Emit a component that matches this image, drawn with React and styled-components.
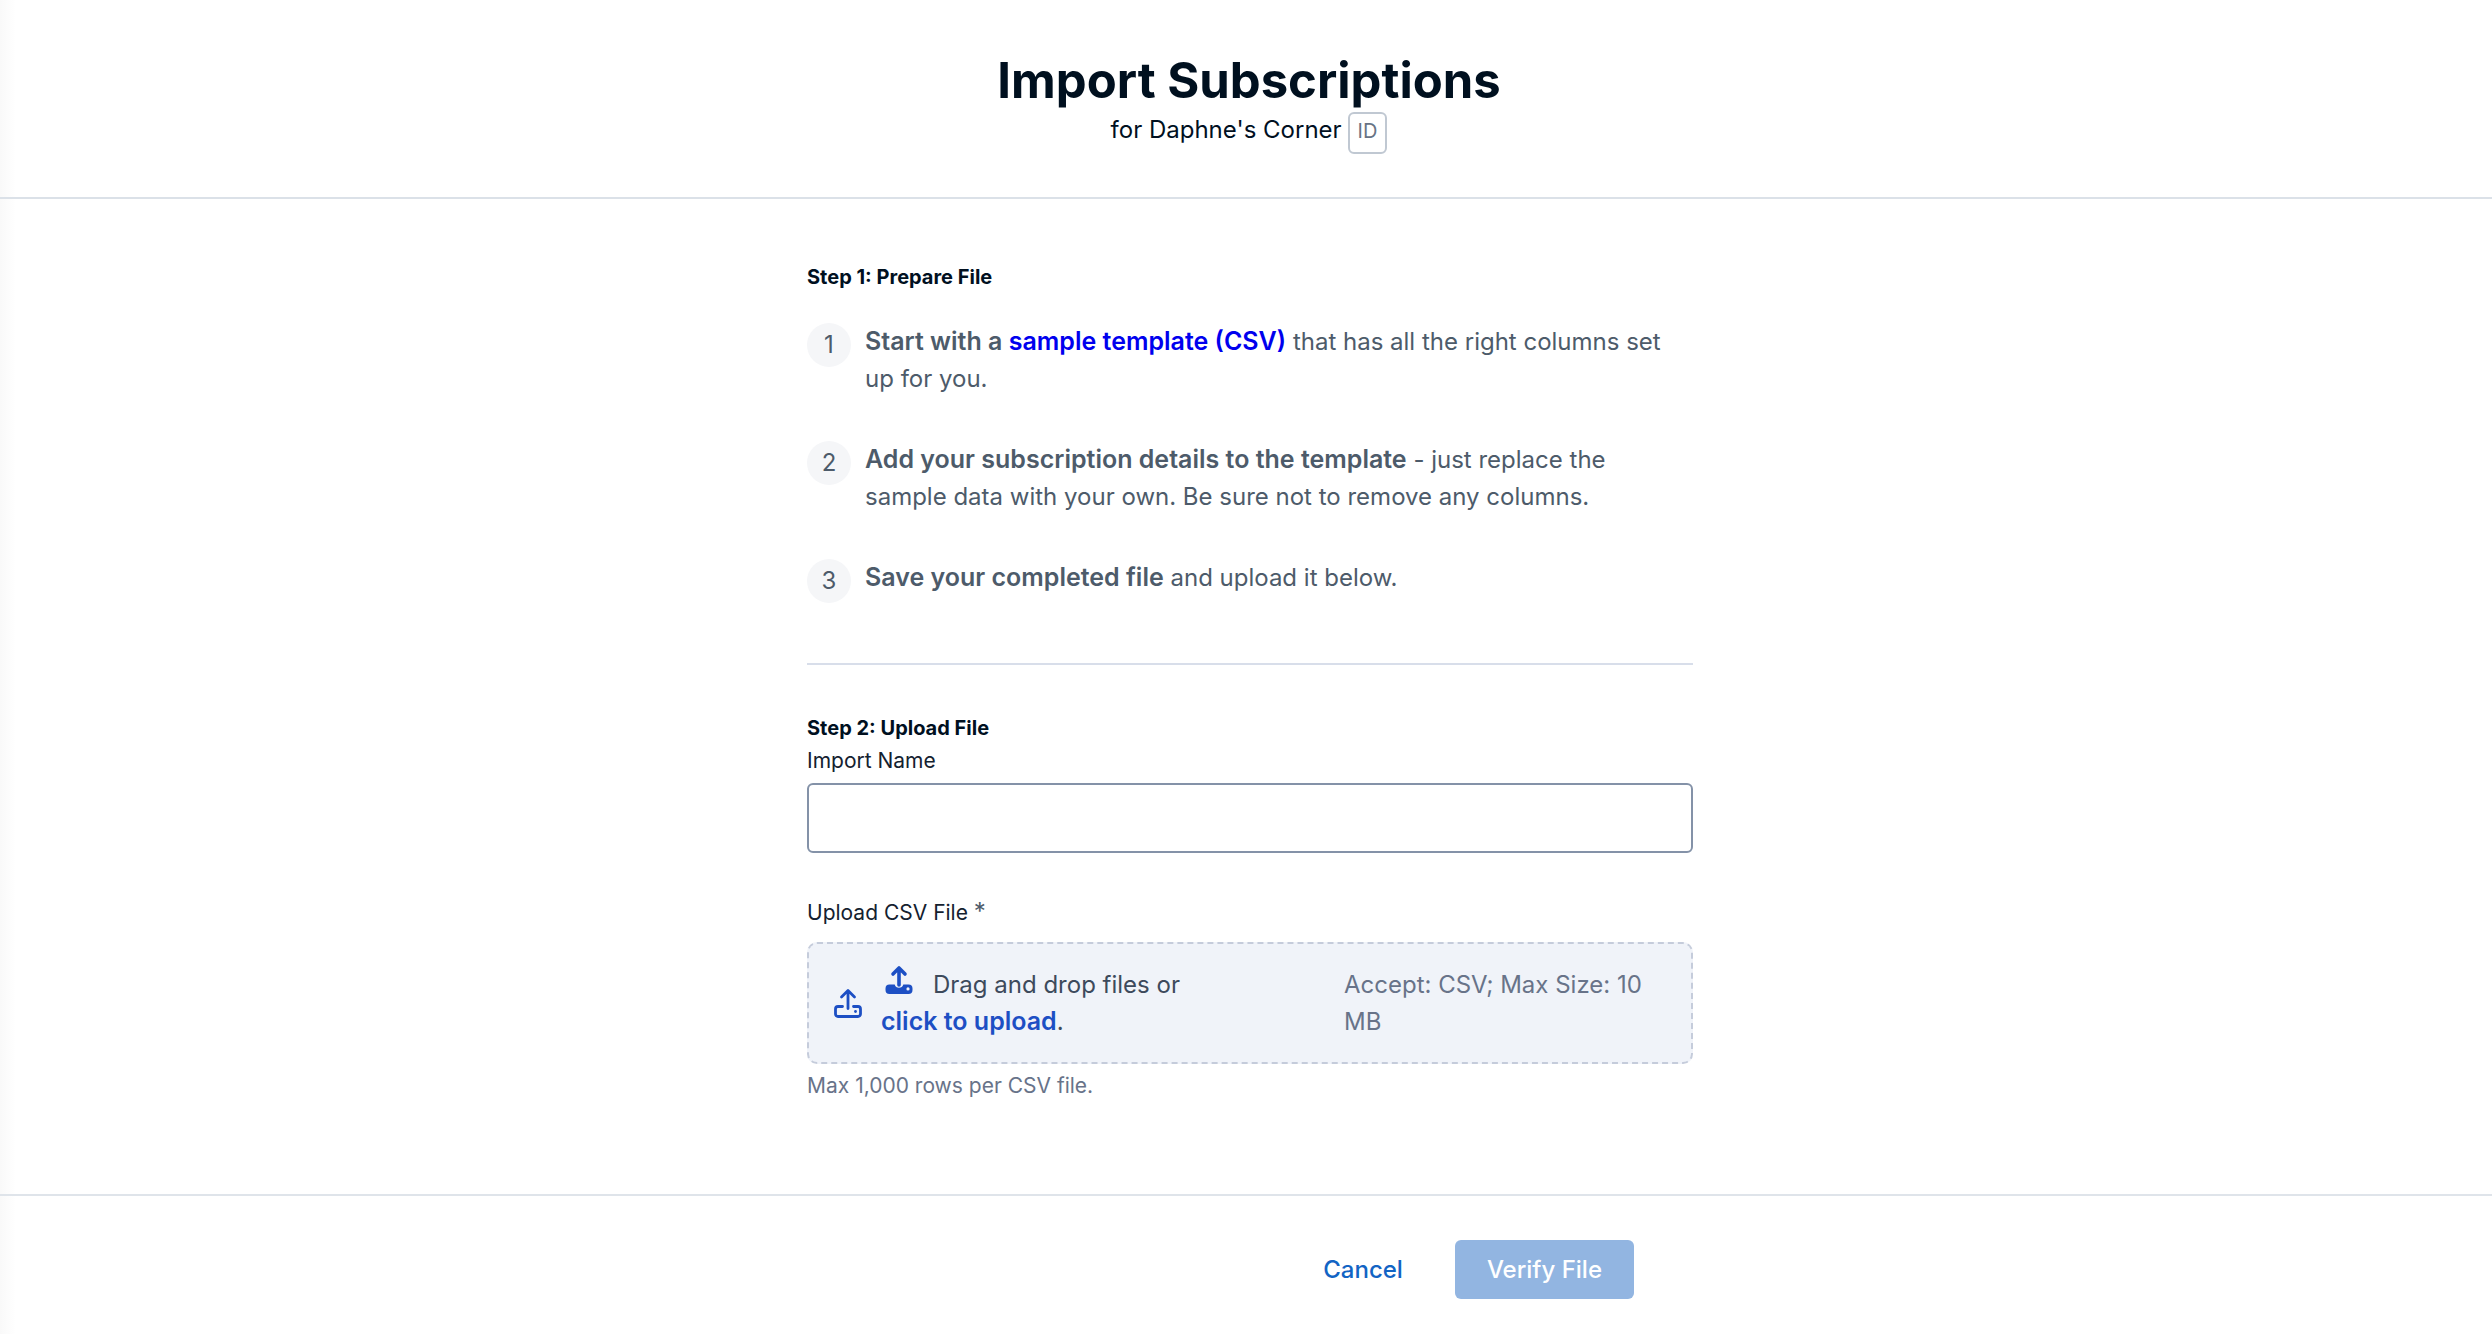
import React, { useState } from 'react';
import styled, { createGlobalStyle } from 'styled-components';

const GlobalStyle = createGlobalStyle`
  *, *::before, *::after { box-sizing: border-box; }
  body {
    margin: 0;
    background: #ffffff;
    color: #00101f;
    font-family: Inter, "Liberation Sans", sans-serif;
    font-size: 24px;
    line-height: 37px;
  }
`;

const Page = styled.div`
  min-height: 100vh;
  display: flex;
  flex-direction: column;
  background: linear-gradient(to right, #f9f9f9, #ffffff 16px);
`;

const Header = styled.header`
  display: flex;
  flex-direction: column;
  align-items: center;
  padding: 51px 0 43px 6px;
  border-bottom: 2px solid #dbe1e8;
`;

const Title = styled.h1`
  margin: 0;
  font-size: 49px;
  line-height: 60px;
  font-weight: 700;
`;

const Subtitle = styled.div`
  display: flex;
  align-items: baseline;
  gap: 6px;
`;

const IdBadge = styled.button`
  padding: 5px 8px 9px;
  border: 2px solid #c0c8d2;
  border-radius: 6px;
  background: #ffffff;
  color: #687385;
  font: inherit;
  font-size: 20px;
  line-height: 24px;
`;

const Main = styled.main`
  flex: 1;
  padding: 66px 0 95px 8px;
`;

const Column = styled.div`
  width: 100%;
  max-width: 886px;
  margin: 0 auto;
`;

const StepHeading = styled.h2`
  margin: 0;
  font-size: 20px;
  line-height: 24px;
  font-weight: 700;
`;

const StepList = styled.ol`
  list-style: none;
  margin: 34px 0 0;
  padding: 0;
  display: flex;
  flex-direction: column;
  gap: 44px;
  color: #4d5b6a;
`;

const StepItem = styled.li`
  display: flex;
  align-items: flex-start;
  gap: 14px;
`;

const StepNumber = styled.span`
  flex: none;
  width: 44px;
  height: 44px;
  border-radius: 50%;
  background: #f5f6f8;
  line-height: 44px;
  text-align: center;
`;

const StepText = styled.p`
  margin: 0;
  max-width: 810px;
`;

const Strong = styled.strong`
  font-size: 25px;
  font-weight: 600;
`;

const TemplateLink = styled.a`
  color: #0000ee;
  text-decoration: none;
`;

const Divider = styled.hr`
  margin: 60px 0 51px;
  border: 0;
  border-top: 2px solid #d8deea;
`;

const Field = styled.div`
  display: flex;
  flex-direction: column;
  margin-top: ${p => p.$space}px;
`;

const Label = styled.label`
  font-size: 21px;
  line-height: 24px;
  color: #14212f;
`;

const Required = styled.span`
  font-size: 24px;
  color: #4d5b6a;
`;

const TextInput = styled.input`
  height: 70px;
  margin-top: 10px;
  padding: 0 20px;
  border: 2px solid #8492a8;
  border-radius: 6px;
  background: #ffffff;
  color: inherit;
  font: inherit;
`;

const DropZone = styled.div`
  display: flex;
  align-items: center;
  min-height: 122px;
  margin-top: 17px;
  padding: 0 27px 0 24px;
  border: 2px dashed #c5ccdb;
  border-radius: 10px;
  background: #f0f3f9;
  color: #3d4a5c;
`;

const DropText = styled.div`
  flex: 0 1 320px;
  margin: 0 auto 0 18px;
`;

const DropLimits = styled.div`
  flex: 0 1 320px;
  color: #687389;
`;

const UploadLabel = styled.label`
  color: #1d4fc4;
  font-size: 25px;
  font-weight: 600;
  cursor: pointer;
`;

const HiddenFile = styled.input`
  position: absolute;
  width: 1px;
  height: 1px;
  overflow: hidden;
  opacity: 0;
`;

const Icon = styled.svg`
  flex: none;
  width: 30px;
  height: 30px;
  color: #1d4fc4;
`;

const InlineIcon = styled(Icon)`
  margin: -4px 19px 0 3px;
  vertical-align: -2px;
`;

const Hint = styled.p`
  margin: 10px 0 0;
  font-size: 21px;
  line-height: 24px;
  color: #687389;
`;

const Footer = styled.footer`
  padding: 44px 0 35px 8px;
  border-top: 2px solid #dfe4ea;
`;

const Actions = styled(Column)`
  display: flex;
  justify-content: flex-end;
  gap: 20px;
  padding-right: 59px;
`;

const Button = styled.button`
  height: 59px;
  padding: 0 32px;
  border: 0;
  border-radius: 6px;
  background: ${p => (p.$primary ? '#92b5e1' : 'transparent')};
  color: ${p => (p.$primary ? '#ffffff' : '#1264c4')};
  font: inherit;
  font-weight: 500;
`;

function UploadOutline() {
  return (
    <Icon viewBox="0 0 30 30" fill="none" stroke="currentColor" strokeWidth="2.8" strokeLinecap="round" strokeLinejoin="round" aria-hidden="true">
      <path d="M15 20.500V3M8.500 9 15 2.500 21.500 9" />
      <path d="M9.500 18.500H5A2.500 2.500 0 0 0 2.500 21v5A2.500 2.500 0 0 0 5 28.500h20a2.500 2.500 0 0 0 2.500-2.500v-5a2.500 2.500 0 0 0-2.500-2.500h-4.500" />
      <circle cx="22.500" cy="23.500" r="1.400" fill="currentColor" stroke="none" />
    </Icon>
  );
}

function UploadSolid() {
  return (
    <InlineIcon viewBox="0 0 30 30" fill="none" stroke="currentColor" strokeLinecap="round" strokeLinejoin="round" aria-hidden="true">
      <path strokeWidth="3.600" d="M15 20V3.500M9 9 15 3 21 9" />
      <path fill="currentColor" stroke="none" fillRule="evenodd" d="M5.500 19.500h5.200a4.500 4.500 0 0 0 8.600 0h5.200a4 4 0 0 1 4 4v1.500a4 4 0 0 1-4 4h-19a4 4 0 0 1-4-4v-1.500a4 4 0 0 1 4-4ZM24 22.300a1.600 1.600 0 1 0 0 3.200 1.600 1.600 0 0 0 0-3.200Z" />
    </InlineIcon>
  );
}

export default function App() {
  const [name, setName] = useState('');
  return (
    <Page>
      <GlobalStyle />
      <Header>
        <Title>Import Subscriptions</Title>
        <Subtitle>
          <span>for Daphne's Corner</span>
          <IdBadge type="button">ID</IdBadge>
        </Subtitle>
      </Header>
      <Main>
        <Column>
          <StepHeading>Step 1: Prepare File</StepHeading>
          <StepList>
            <StepItem>
              <StepNumber>1</StepNumber>
              <StepText>
                <Strong>Start with a <TemplateLink href="#template">sample template (CSV)</TemplateLink></Strong> that has all the right columns set up for you.
              </StepText>
            </StepItem>
            <StepItem>
              <StepNumber>2</StepNumber>
              <StepText>
                <Strong>Add your subscription details to the template</Strong> - just replace the sample data with your own. Be sure not to remove any columns.
              </StepText>
            </StepItem>
            <StepItem>
              <StepNumber>3</StepNumber>
              <StepText>
                <Strong>Save your completed file</Strong> and upload it below.
              </StepText>
            </StepItem>
          </StepList>
          <Divider />
          <StepHeading>Step 2: Upload File</StepHeading>
          <Field $space={9}>
            <Label htmlFor="import-name">Import Name</Label>
            <TextInput id="import-name" type="text" value={name} onChange={e => setName(e.target.value)} />
          </Field>
          <Field $space={47}>
            <Label htmlFor="csv-file">Upload CSV File <Required>*</Required></Label>
            <DropZone>
              <UploadOutline />
              <DropText>
                <UploadSolid />
                Drag and drop files or <UploadLabel htmlFor="csv-file">click to upload</UploadLabel>.
                <HiddenFile id="csv-file" type="file" accept=".csv" />
              </DropText>
              <DropLimits>Accept: CSV; Max Size: 10 MB</DropLimits>
            </DropZone>
            <Hint>Max 1,000 rows per CSV file.</Hint>
          </Field>
        </Column>
      </Main>
      <Footer>
        <Actions>
          <Button type="button">Cancel</Button>
          <Button type="submit" $primary disabled>Verify File</Button>
        </Actions>
      </Footer>
    </Page>
  );
}
